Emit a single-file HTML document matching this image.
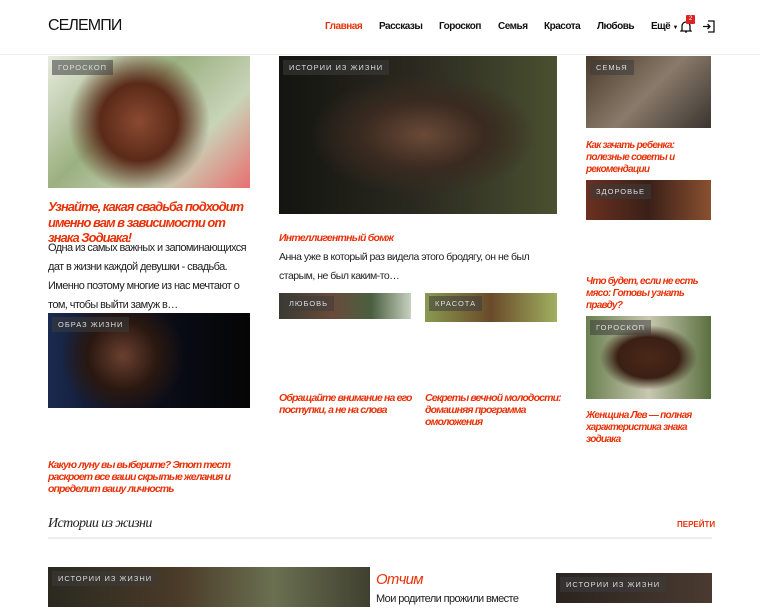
<!DOCTYPE html>
<html><head><meta charset="utf-8"><style>
*{margin:0;padding:0;box-sizing:border-box}
body{width:760px;height:600px;overflow:hidden;background:#fff;font-family:"Liberation Sans",sans-serif;color:#222;position:relative}
.a{position:absolute}
.hdr{left:0;top:0;width:760px;height:55px;border-bottom:1px solid #eee}
.logo{left:48px;top:17px;font-size:16px;letter-spacing:-0.9px;color:#111}
.nav{top:21px;font-size:10px;font-weight:bold;color:#111;letter-spacing:-0.5px}
.img{overflow:hidden}
.tag{position:absolute;left:4px;top:4px;padding:3px 6px;background:rgba(60,60,60,.55);color:#ddd;font-size:7.5px;letter-spacing:1px;text-transform:uppercase}
.t{color:#e8320a;font-style:italic;font-weight:bold;letter-spacing:-0.75px;white-space:nowrap}
.p{font-size:11px;line-height:19px;color:#222;letter-spacing:-0.6px;white-space:nowrap}
</style></head><body>
<div class="a hdr"></div>
<div class="a logo">СЕЛЕМПИ</div>
<div class="a nav" style="left:325px;color:#e8320a">Главная</div>
<div class="a nav" style="left:379px">Рассказы</div>
<div class="a nav" style="left:439px">Гороскоп</div>
<div class="a nav" style="left:498px">Семья</div>
<div class="a nav" style="left:544px">Красота</div>
<div class="a nav" style="left:597px">Любовь</div>
<div class="a nav" style="left:651px">Ещё <span style="font-size:6px">▼</span></div>
<svg class="a" style="left:680px;top:20px" width="12" height="14" viewBox="0 0 12 14"><path d="M2 10V6a4 4 0 0 1 8 0v4l1 1H1z M5 12h2" fill="none" stroke="#111" stroke-width="1.3"/></svg>
<div class="a" style="left:686px;top:15px;width:9px;height:9px;background:#d22;color:#fff;font-size:6px;text-align:center;line-height:9px;border-radius:1px">2</div>
<svg class="a" style="left:702px;top:20px" width="13" height="13" viewBox="0 0 13 13"><path d="M6 1h6v11H6 M1 6.5h7 M5.5 4l2.5 2.5-2.5 2.5" fill="none" stroke="#111" stroke-width="1.3"/></svg>

<div class="a img" style="left:48px;top:56px;width:202px;height:132px;background:radial-gradient(circle at 45% 50%,#8a4a30 0,#5a2a18 30%,transparent 55%),linear-gradient(135deg,#e8ece0,#9bb080 40%,#c8d4b8 70%,#e87070)"><span class="tag">Гороскоп</span></div>
<div class="a t" style="left:48px;top:199px;font-size:13px;line-height:15.5px;letter-spacing:-1px">Узнайте, какая свадьба подходит<br>именно вам в зависимости от<br>знака Зодиака!</div>
<div class="a p" style="left:48px;top:239px">Одна из самых важных и запоминающихся<br>дат в жизни каждой девушки - свадьба.<br>Именно поэтому многие из нас мечтают о<br>том, чтобы выйти замуж в…</div>
<div class="a img" style="left:48px;top:313px;width:202px;height:95px;background:radial-gradient(circle at 37% 45%,#6a4030 0,#2a1810 25%,transparent 45%),linear-gradient(90deg,#1a2a50,#0c1020 40%,#050505)"><span class="tag">Образ жизни</span></div>
<div class="a t" style="left:48px;top:459px;font-size:10.5px;line-height:12px;letter-spacing:-0.9px">Какую луну вы выберите? Этот тест<br>раскроет все ваши скрытые желания и<br>определит вашу личность</div>

<div class="a img" style="left:279px;top:56px;width:278px;height:158px;background:radial-gradient(ellipse at 52% 50%,#6a4a38 0,#3a2a20 30%,transparent 55%),linear-gradient(90deg,#141410,#2a2a20 50%,#4a5030)"><span class="tag">Истории из жизни</span></div>
<div class="a t" style="left:279px;top:232px;font-size:10.5px">Интеллигентный бомж</div>
<div class="a p" style="left:279px;top:248px;font-size:10.5px;letter-spacing:-0.5px">Анна уже в который раз видела этого бродягу, он не был<br>старым, не был каким-то…</div>
<div class="a img" style="left:279px;top:293px;width:132px;height:26px;background:linear-gradient(90deg,#3a3a30,#6a4a3a 40%,#4a6040 70%,#c8d0c0)"><span class="tag" style="top:3px">Любовь</span></div>
<div class="a img" style="left:425px;top:293px;width:132px;height:29px;background:linear-gradient(90deg,#8a9a50,#6a4a2a 50%,#a0b060)"><span class="tag" style="top:3px">Красота</span></div>
<div class="a t" style="left:279px;top:392px;font-size:10.5px;line-height:12px;letter-spacing:-0.85px">Обращайте внимание на его<br>поступки, а не на слова</div>
<div class="a t" style="left:425px;top:392px;font-size:10.5px;line-height:12px;letter-spacing:-0.85px">Секреты вечной молодости:<br>домашняя программа<br>омоложения</div>

<div class="a img" style="left:586px;top:56px;width:125px;height:72px;background:linear-gradient(135deg,#4a3a2a,#8a7a6a 50%,#3a3530)"><span class="tag">Семья</span></div>
<div class="a t" style="left:586px;top:140px;font-size:10px;line-height:12px">Как зачать ребенка:<br>полезные советы и<br>рекомендации</div>
<div class="a img" style="left:586px;top:180px;width:125px;height:40px;background:linear-gradient(90deg,#6a3020,#3a2018 50%,#8a5030)"><span class="tag">Здоровье</span></div>
<div class="a t" style="left:586px;top:276px;font-size:10px;line-height:12px">Что будет, если не есть<br>мясо: Готовы узнать<br>правду?</div>
<div class="a img" style="left:586px;top:316px;width:125px;height:83px;background:radial-gradient(ellipse at 50% 50%,#4a2818 0,#3a2014 35%,transparent 55%),linear-gradient(90deg,#6a8050,#c8c8b0 50%,#5a7040)"><span class="tag">Гороскоп</span></div>
<div class="a t" style="left:586px;top:410px;font-size:10px;line-height:12px">Женщина Лев — полная<br>характеристика знака<br>зодиака</div>

<div class="a" style="left:48px;top:516px;font-family:'Liberation Serif',serif;font-style:italic;font-size:14px;color:#222;letter-spacing:-0.6px">Истории из жизни</div>
<div class="a" style="left:677px;top:520px;font-size:8px;font-weight:bold;color:#e8320a">ПЕРЕЙТИ</div>
<div class="a" style="left:48px;top:537px;width:664px;height:2px;background:#eee"></div>

<div class="a img" style="left:48px;top:567px;width:322px;height:40px;background:linear-gradient(90deg,#2a2a20,#4a3a28 40%,#6a7050 70%,#404030)"><span class="tag">Истории из жизни</span></div>
<div class="a t" style="left:376px;top:571px;font-size:15px;font-weight:normal">Отчим</div>
<div class="a p" style="left:376px;top:590px;font-size:11px">Мои родители прожили вместе</div>
<div class="a img" style="left:556px;top:573px;width:156px;height:30px;background:linear-gradient(90deg,#2a2420,#4a3a30)"><span class="tag">Истории из жизни</span></div>
</body></html>
